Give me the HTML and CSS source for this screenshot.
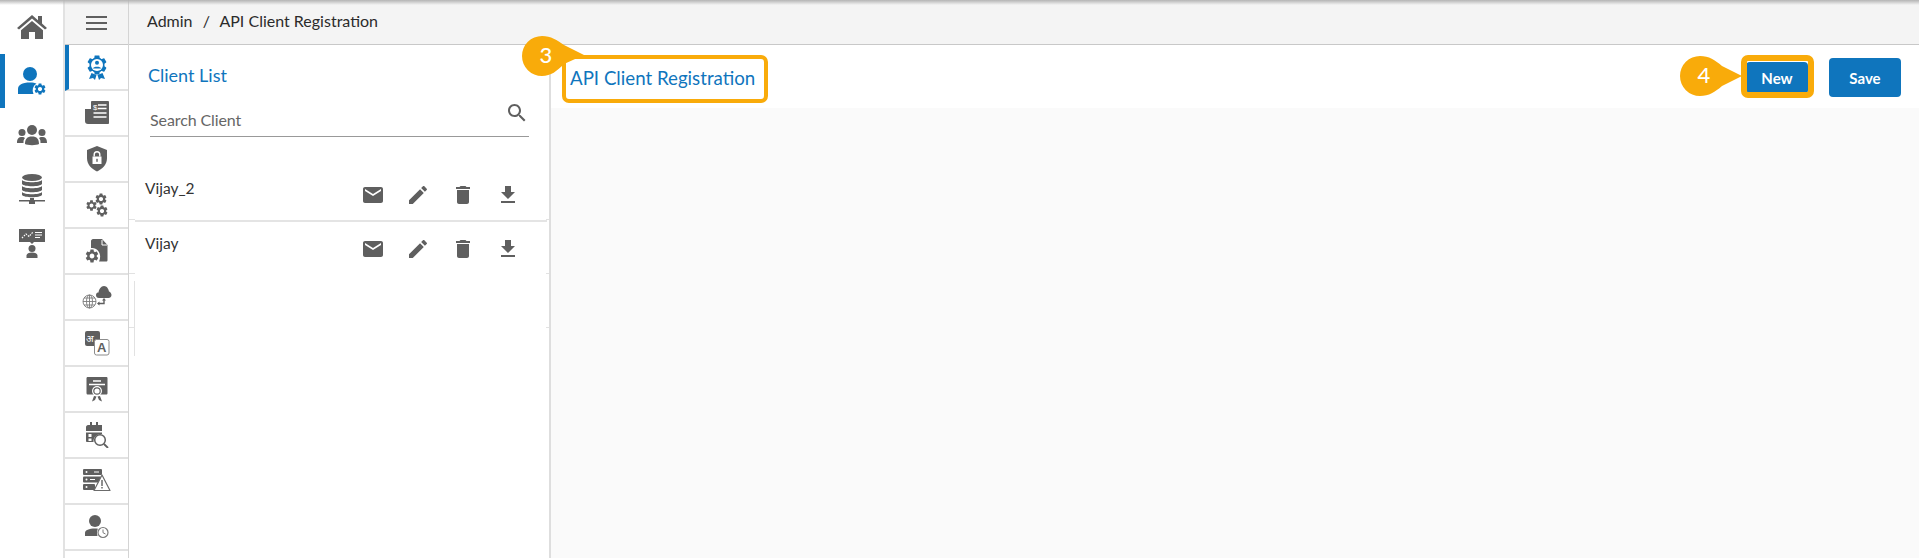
FILE: index.html
```html
<!DOCTYPE html>
<html lang="en">
<head>
  <meta charset="UTF-8" />
  <title>API Client Registration</title>
  <link rel="stylesheet" href="styles.css">
</head>
<body>

<svg class="defs" width="0" height="0">
  <symbol id="gear" viewBox="0 0 24 24">
    <path d="M19.14 12.94c.04-.3.06-.61.06-.94 0-.32-.02-.64-.07-.94l2.03-1.58c.18-.14.23-.41.12-.61l-1.92-3.32c-.12-.22-.37-.29-.59-.22l-2.39.96c-.5-.38-1.03-.7-1.62-.94l-.36-2.54c-.04-.24-.24-.41-.48-.41h-3.84c-.24 0-.43.17-.47.41l-.36 2.54c-.59.24-1.13.57-1.62.94l-2.39-.96c-.22-.08-.47 0-.59.22L2.74 8.87c-.12.21-.08.47.12.61l2.03 1.58c-.05.3-.09.63-.09.94s.02.64.07.94l-2.03 1.58c-.18.14-.23.41-.12.61l1.92 3.32c.12.22.37.29.59.22l2.39-.96c.5.38 1.03.7 1.62.94l.36 2.54c.05.24.24.41.48.41h3.84c.24 0 .44-.17.47-.41l.36-2.54c.59-.24 1.13-.56 1.62-.94l2.39.96c.22.08.47 0 .59-.22l1.92-3.32c.12-.22.07-.47-.12-.61l-2.01-1.58zM12 15.6c-1.98 0-3.6-1.62-3.6-3.6s1.62-3.6 3.6-3.6 3.6 1.62 3.6 3.6-1.62 3.6-3.6 3.6z"/>
  </symbol>
  <symbol id="mail" viewBox="0 0 24 24"><path d="M20 4H4c-1.1 0-2 .9-2 2v12c0 1.1.9 2 2 2h16c1.1 0 2-.9 2-2V6c0-1.1-.9-2-2-2zm0 4l-8 5-8-5V6l8 5 8-5v2z"/></symbol>
  <symbol id="edit" viewBox="0 0 24 24"><path d="M3 17.25V21h3.75L17.81 9.94l-3.75-3.75L3 17.25zM20.71 7.04c.39-.39.39-1.02 0-1.41l-2.34-2.34c-.39-.39-1.02-.39-1.41 0l-1.83 1.83 3.75 3.75 1.83-1.83z"/></symbol>
  <symbol id="trash" viewBox="0 0 24 24"><path d="M6 19c0 1.1.9 2 2 2h8c1.1 0 2-.9 2-2V7H6v12zM19 4h-3.5l-1-1h-5l-1 1H5v2h14V4z"/></symbol>
  <symbol id="download" viewBox="0 0 24 24"><path d="M19 9h-4V3H9v6H5l7 7 7-7zM5 18v2h14v-2H5z"/></symbol>
</svg>

<div class="app">

  <div class="rail">
    <div class="rail-item">
      <svg width="32" height="26" viewBox="0 0 32 26"><path d="M16 1 L1 14 L3 15.500 L16 4.500 L29 15.500 L31 14 L26 9.600 V2 H22 V6.200Z"/><path d="M16 7 L5 16.300 V25 H13 V18 H19 V25 H27 V16.300Z"/></svg>
    </div>
    <div class="rail-item active">
      <svg width="30" height="30" viewBox="0 0 30 30">
        <circle cx="13" cy="8" r="7"/>
        <path d="M1 28 V23 C1 19 5 16.500 13 16.500 C16 16.500 18 17 19.500 17.500 A8 8 0 0 0 16.500 28Z"/>
        <use href="#gear" x="16" y="16" width="14" height="14"/>
      </svg>
    </div>
    <div class="rail-item">
      <svg width="32" height="22" viewBox="0 0 32 22">
        <circle cx="16" cy="6" r="5"/><circle cx="6" cy="8.500" r="3.500"/><circle cx="26" cy="8.500" r="3.500"/>
        <path d="M1 19 C1 14 3 13 6 13 C7.500 13 8.500 13.500 9 14 C7.500 15.500 7.500 17 7.500 19Z M31 19 C31 14 29 13 26 13 C24.500 13 23.500 13.500 23 14 C24.500 15.500 24.500 17 24.500 19Z M9 20 C9 15 11 12.500 16 12.500 C21 12.500 23 15 23 20 C21 21.500 11 21.500 9 20Z"/>
      </svg>
    </div>
    <div class="rail-item">
      <svg width="28" height="32" viewBox="0 0 28 32">
        <ellipse cx="14" cy="4.500" rx="10" ry="3.500"/>
        <path d="M4 7 C6 10 22 10 24 7 V11 C22 14 6 14 4 11Z M4 13 C6 16 22 16 24 13 V17 C22 20 6 20 4 17Z M4 19 C6 22 22 22 24 19 V22 C22 25 6 25 4 22Z"/>
        <path d="M12 25 H16 V27 H27 V28.500 H17 V31 H11 V28.500 H1 V27 H12Z"/>
      </svg>
    </div>
    <div class="rail-item">
      <svg width="28" height="32" viewBox="0 0 28 32">
        <path d="M1 2 H27 V15 H16 L14 17 L12 15 H1Z"/>
        <path d="M4 11 L8 7 L11 9.500 L15 5" fill="none" stroke="#fff" stroke-width="1.200" stroke-dasharray="1.500 1.200"/>
        <path d="M17 5.500 H24 M17 8 H24 M17 10.500 H22" stroke="#fff" stroke-width="1.100"/>
        <circle cx="14" cy="21.500" r="3.500"/>
        <path d="M8.500 31 V28.500 C8.500 26.500 11 25.500 14 25.500 C17 25.500 19.500 26.500 19.500 28.500 V31Z"/>
      </svg>
    </div>
  </div>

  <div class="sidebar">
    <div class="menu-btn">
      <svg width="21" height="14" viewBox="0 0 21 14"><path d="M0 0 H21 V2 H0Z M0 6 H21 V8 H0Z M0 12 H21 V14 H0Z"/></svg>
    </div>
    <div class="side-item active">
      <svg width="24" height="26" viewBox="0 0 24 26">
        <use href="#gear" x="0" y="-1" width="24" height="24"/>
        <circle cx="12" cy="11" r="7.500"/>
        <circle cx="12" cy="11" r="6" fill="#fff"/>
        <circle cx="12" cy="8.700" r="2"/>
        <path d="M8 14.500 C8 12.300 16 12.300 16 14.500Z"/>
        <path d="M6.500 19 L4 25 L8 24 L10 26 L11.500 21Z M17.500 19 L20 25 L16 24 L14 26 L12.500 21Z"/>
      </svg>
    </div>
    <div class="side-item">
      <svg width="24" height="24" viewBox="0 0 24 24">
        <path d="M0 8 H6 V1 C6 .500 6.500 0 7 0 H23 C23.500 0 24 .500 24 1 V22 C24 23 23 23 23 23 H3 C1 23 0 22 0 20Z"/>
        <text class="icon-text" x="8" y="8.500" font-size="8" fill="#fff">$</text>
        <path d="M13 4 H21.500 M13 7.500 H21.500 M8.500 12 H21.500 M8.500 16 H21.500" stroke="#fff" stroke-width="1.300"/>
      </svg>
    </div>
    <div class="side-item">
      <svg width="22" height="26" viewBox="0 0 22 26">
        <path d="M11 0 L21 4 V12 C21 19 16 23 11 25.500 C6 23 1 19 1 12 V4Z"/>
        <path d="M6.500 10.500 H15.500 V18 H6.500Z" fill="#fff"/>
        <path d="M8.200 10.500 V8.500 A2.800 2.800 0 0 1 13.800 8.500 V10.500" fill="none" stroke="#fff" stroke-width="1.400"/>
        <rect x="10.300" y="12.800" width="1.400" height="3"/>
      </svg>
    </div>
    <div class="side-item">
      <svg width="24" height="26" viewBox="0 0 24 26">
        <use href="#gear" x="9" y="0" width="14" height="14"/>
        <use href="#gear" x="0" y="7" width="13" height="13"/>
        <use href="#gear" x="10" y="12" width="14" height="14"/>
      </svg>
    </div>
    <div class="side-item">
      <svg width="24" height="24" viewBox="0 0 24 24">
        <path d="M8 0 H17 L22.500 6 V21 C22.500 22 22 22.500 21 22.500 H14 C17 17 14 8 6 9 V2 C6 1 7 0 8 0Z"/>
        <path d="M17 1 V6 H22" fill="none" stroke="#fff" stroke-width="1"/>
        <use href="#gear" x="-1" y="9" width="16" height="16"/>
      </svg>
    </div>
    <div class="side-item">
      <svg width="30" height="24" viewBox="0 0 30 24">
        <path d="M17 13 C15 13 14 12 14 10 C14 8 15.500 7.500 16.500 7.500 C17 4 19 1 22 1 C25 1 26.500 4 27 6.500 C28.500 7 29.500 8.500 29.500 10 C29.500 12 28 13 26.500 13Z"/>
        <path d="M22 14.500 V18.500 H16" fill="none" stroke-width="1.400" stroke="#5f5f5f"/>
        <path d="M22 13 L20 15.500 H24Z M15 18.500 L17.500 16.500 V20.500Z"/>
        <g fill="none" stroke="#7a7a7a" stroke-width=".900">
          <circle cx="7.500" cy="16.500" r="6.500"/><ellipse cx="7.500" cy="16.500" rx="3" ry="6.500"/>
          <path d="M7.500 10 V23 M1 16.500 H14 M2 13 H13 M2 20 H13"/>
        </g>
      </svg>
    </div>
    <div class="side-item">
      <svg width="26" height="26" viewBox="0 0 26 26">
        <rect x="1" y="1" width="15" height="15" rx="2"/>
        <text class="icon-text" x="2" y="12" font-size="10" fill="#fff">अ</text>
        <rect x="10.500" y="9.500" width="14.500" height="15.500" rx="2" fill="#fff" stroke="#8c8c8c"/>
        <text class="icon-text" x="13" y="22" font-size="13" font-weight="700">A</text>
      </svg>
    </div>
    <div class="side-item">
      <svg width="22" height="26" viewBox="0 0 22 26">
        <path d="M2 1 H20 C21 1 21.500 1.500 21.500 2 V17 C21.500 18 21 18.500 20 18.500 H2 C1 18.500 .500 18 .500 17 V2 C.500 1.500 1 1 2 1Z"/>
        <path d="M7 5 H15 M3 8.500 H19" stroke="#fff" stroke-width="1.300"/>
        <circle cx="11" cy="15" r="5" fill="#fff"/>
        <circle cx="11" cy="15" r="3.200" fill="none" stroke="#5f5f5f" stroke-width="1.200"/>
        <path d="M8 20 L6 25.500 L9 24 L10.500 20.500Z M14 20 L16 25.500 L13 24 L11.500 20.500Z"/>
      </svg>
    </div>
    <div class="side-item">
      <svg width="24" height="26" viewBox="0 0 24 26">
        <path d="M3 3 H5 V0 H7 V3 H11 V0 H13 V3 H17 V9 H1 V5 C1 4 2 3 3 3Z"/>
        <path d="M1 10.500 H17 V12 C11 12 8.500 15 8.500 20 H2 C1.500 20 1 19.500 1 19Z"/>
        <rect x="3.500" y="12" width="3" height="3" fill="#fff"/><rect x="3.500" y="16.500" width="3" height="2.500" fill="#fff"/>
        <circle cx="15" cy="18" r="5.300" fill="none" stroke="#5f5f5f" stroke-width="1.500"/>
        <path d="M19 22 L23 26" stroke="#5f5f5f" stroke-width="1.800"/>
      </svg>
    </div>
    <div class="side-item">
      <svg width="28" height="24" viewBox="0 0 28 24">
        <rect x="0" y="0" width="19" height="6" rx="1"/><rect x="0" y="7.500" width="18" height="6" rx="1"/><rect x="0" y="15" width="12" height="6" rx="1"/>
        <circle cx="3.500" cy="3" r="1" fill="#fff"/><circle cx="3.500" cy="10.500" r="1" fill="#fff"/><circle cx="3.500" cy="18" r="1" fill="#fff"/>
        <path d="M11 3 H16 M7 10.500 H12" stroke="#fff" stroke-width="1"/>
        <path d="M19 6 L27 21.500 H11Z" fill="#fff" stroke="#6b6b6b" stroke-width="1.200" stroke-linejoin="round"/>
        <path d="M18.300 11 H19.700 V17 H18.300Z M18.300 18 H19.700 V19.500 H18.300Z"/>
      </svg>
    </div>
    <div class="side-item">
      <svg width="24" height="24" viewBox="0 0 24 24">
        <circle cx="10" cy="6" r="6"/>
        <path d="M0 21 V18 C0 15 4 13.500 10 13.500 C11 13.500 12 13.600 13 13.700 C12 15 11.500 18 12.500 21Z"/>
        <circle cx="18" cy="17.500" r="5" fill="#fff" stroke="#7a7a7a" stroke-width="1.200"/>
        <path d="M18 14.500 V17.700 L20.500 19" fill="none" stroke="#7a7a7a" stroke-width="1"/>
      </svg>
    </div>
    <div class="side-item"></div>
  </div>

  <div class="content">
    <div class="crumbs">Admin <span class="crumb-sep">/</span> API Client Registration</div>

    <div class="panes">
      <div class="client-pane">
        <div class="pane-title">Client List</div>
        <div class="search">
          <span class="search-label">Search Client</span>
          <svg class="search-icon" width="24" height="24" viewBox="0 0 24 24"><path d="M15.500 14h-.79l-.28-.27C15.410 12.590 16 11.110 16 9.500 16 5.910 13.090 3 9.500 3S3 5.910 3 9.500 5.910 16 9.500 16c1.610 0 3.090-.59 4.230-1.570l.27.28v.79l5 4.990L20.490 19l-4.990-5zm-6 0C7.010 14 5 11.990 5 9.500S7.010 5 9.500 5 14 7.010 14 9.500 11.990 14 9.500 14z"/></svg>
        </div>
        <div class="client-row first">
          <span class="client-name">Vijay_2</span>
          <div class="row-icons">
            <svg width="24" height="24"><use href="#mail"/></svg>
            <svg width="24" height="24"><use href="#edit"/></svg>
            <svg width="24" height="24"><use href="#trash"/></svg>
            <svg width="24" height="24"><use href="#download"/></svg>
          </div>
        </div>
        <div class="client-row">
          <span class="client-name">Vijay</span>
          <div class="row-icons">
            <svg width="24" height="24"><use href="#mail"/></svg>
            <svg width="24" height="24"><use href="#edit"/></svg>
            <svg width="24" height="24"><use href="#trash"/></svg>
            <svg width="24" height="24"><use href="#download"/></svg>
          </div>
        </div>
      </div>

      <div class="main-pane">
        <div class="main-head">
          <div class="main-title">API Client Registration</div>
          <div class="actions">
            <button class="btn btn-new">New</button>
            <button class="btn">Save</button>
          </div>
        </div>
        <div class="main-body"></div>
      </div>
    </div>
  </div>
</div>

<!-- faint leftovers of the list behind the pane -->
<div class="ghost-tick tick-a"></div>
<div class="ghost-tick tick-b"></div>
<div class="ghost-tick tick-c"></div>
<div class="ghost-line"></div>

<!-- callouts drawn on top of the screenshot -->
<div class="callout-box box-title"></div>
<div class="callout-box box-new"></div>
<svg class="callout callout-3" width="62" height="40" viewBox="0 0 62 40">
  <path d="M20 0 C29 0 35 4 42 9 L62 19 L42 28 C35 35 29 40 20 40 A20 20 0 0 1 20 0Z"/>
  <text x="24" y="27" text-anchor="middle">3</text>
</svg>
<svg class="callout callout-4" width="62" height="40" viewBox="0 0 62 40">
  <path d="M20 0 C29 0 35 4 42 10 L62 20 L42 30 C35 36 29 40 20 40 A20 20 0 0 1 20 0Z"/>
  <text x="24" y="27" text-anchor="middle">4</text>
</svg>

</body>
</html>
```

FILE: styles.css
```css
* {
  box-sizing: border-box;
}
html, body {
  height: 100%;
}
body {
  margin: 0;
  font-family: Lato, "Open Sans", sans-serif;
  color: #333;
  background: #fff;
  overflow: hidden;
}
body::before {
  content: "";
  position: absolute;
  top: 0; left: 0; right: 0;
  height: 5px;
  background: linear-gradient(#b4b4b4, rgba(200,200,200,0));
  z-index: 5;
}
.defs {
  position: absolute;
}
.app {
  display: flex;
  height: 558px;
}
svg {
  fill: #5f5f5f;
  display: block;
}
.icon-text {
  font-family: "Liberation Sans", "Noto Sans", sans-serif;
}

.rail {
  width: 65px;
  flex: none;
  border-right: 2px solid #e2e2e2;
}
.rail-item {
  height: 54px;
  display: flex;
  align-items: center;
  justify-content: center;
  padding-right: 0;
}
.rail-item.active {
  border-left: 5px solid #0f75bd;
  padding-right: 5px;
}
.rail-item.active svg {
  fill: #0f75bd;
}

.sidebar {
  width: 64px;
  flex: none;
  border-right: 1px solid #d4d4d4;
  overflow: hidden;
}
.menu-btn {
  height: 45px;
  background: #f4f4f4;
  border-bottom: 1px solid #c8c8c8;
  padding-top: 2px;
  display: flex;
  align-items: center;
  justify-content: center;
}
.side-item {
  height: 46px;
  border-bottom: 2px solid #e2e2e2;
  display: flex;
  align-items: center;
  justify-content: center;
}
.side-item.active {
  border-left: 4px solid #0f75bd;
  padding-right: 4px;
}
.side-item.active svg {
  fill: #0f75bd;
}

.content {
  flex: 1;
  display: flex;
  flex-direction: column;
  min-width: 0;
}
.crumbs {
  height: 45px;
  background: #f4f4f4;
  border-bottom: 1px solid #c8c8c8;
  padding: 11px 0 0 18px;
  font-size: 16px;
  color: #2b2b2b;
}
.crumb-sep {
  margin: 0 6px;
}
.panes {
  flex: 1;
  display: flex;
}

.client-pane {
  width: 422px;
  flex: none;
  border-right: 2px solid #dedede;
}
.pane-title {
  color: #0f75bd;
  font-size: 18px;
  padding: 19px 0 0 19px;
}
.search {
  margin: 16px 20px 0 21px;
  height: 35px;
  border-bottom: 1px solid #999;
  position: relative;
  padding-top: 8px;
  color: #666;
  font-size: 16px;
}
.search-label {
  letter-spacing: -0.1px;
}
.search-icon {
  position: absolute;
  top: -1px;
  right: 0;
}
.client-row {
  height: 53px;
  margin: 0 2px 0 6px;
  padding-left: 10px;
  display: flex;
  justify-content: space-between;
}
.client-row.first {
  height: 51px;
  margin-top: 34px;
  border-bottom: 2px solid #e4e4e4;
}
.client-name {
  font-size: 15.5px;
  color: #333;
  padding-top: 12px;
}
.client-row.first .client-name {
  padding-top: 8px;
}
.row-icons {
  display: flex;
  gap: 21px;
  padding: 15px 27px 0 0;
}
.client-row.first .row-icons {
  padding-top: 12px;
}

.main-pane {
  flex: 1;
  display: flex;
  flex-direction: column;
  min-width: 0;
}
.main-head {
  height: 63px;
  display: flex;
  align-items: center;
  justify-content: space-between;
  padding: 2px 18px 0 19px;
}
.main-title {
  color: #0f75bd;
  font-size: 18.7px;
}
.actions {
  display: flex;
  gap: 21px;
  align-items: center;
}
.btn {
  width: 72px;
  height: 39px;
  background: #0f75bd;
  color: #fff;
  border: none;
  border-radius: 4px;
  font-family: inherit;
  font-size: 15px;
  font-weight: 700;
}
.btn-new {
  width: 62px;
  height: 32px;
}
.main-body {
  flex: 1;
  background: #fafafa;
}

.ghost-tick {
  position: absolute;
  left: 129px;
  width: 420px;
  height: 1px;
  background: linear-gradient(90deg, #e2e2e2 6px, transparent 6px, transparent 417px, #e2e2e2 417px);
}
.tick-a { top: 219px; }
.tick-b { top: 273px; }
.tick-c { top: 327px; }
.ghost-line {
  position: absolute;
  left: 134px;
  top: 281px;
  width: 1px;
  height: 75px;
  background: #e2e2e2;
}

.callout-box {
  position: absolute;
  border-style: solid;
  border-color: #f9ab0a;
}
.box-title {
  left: 562px; top: 55px;
  width: 206px; height: 48px;
  border-width: 4px;
  border-radius: 7px;
}
.box-new {
  left: 1741px; top: 55px;
  width: 73px; height: 43px;
  border-width: 6px;
  border-radius: 7px;
}
.callout {
  position: absolute;
  fill: #f9ab0a;
}
.callout text {
  fill: #fff;
  font-size: 22px;
  font-weight: 500;
}
.callout-3 {
  left: 522px; top: 36px;
}
.callout-4 {
  left: 1680px; top: 56px;
}
```
